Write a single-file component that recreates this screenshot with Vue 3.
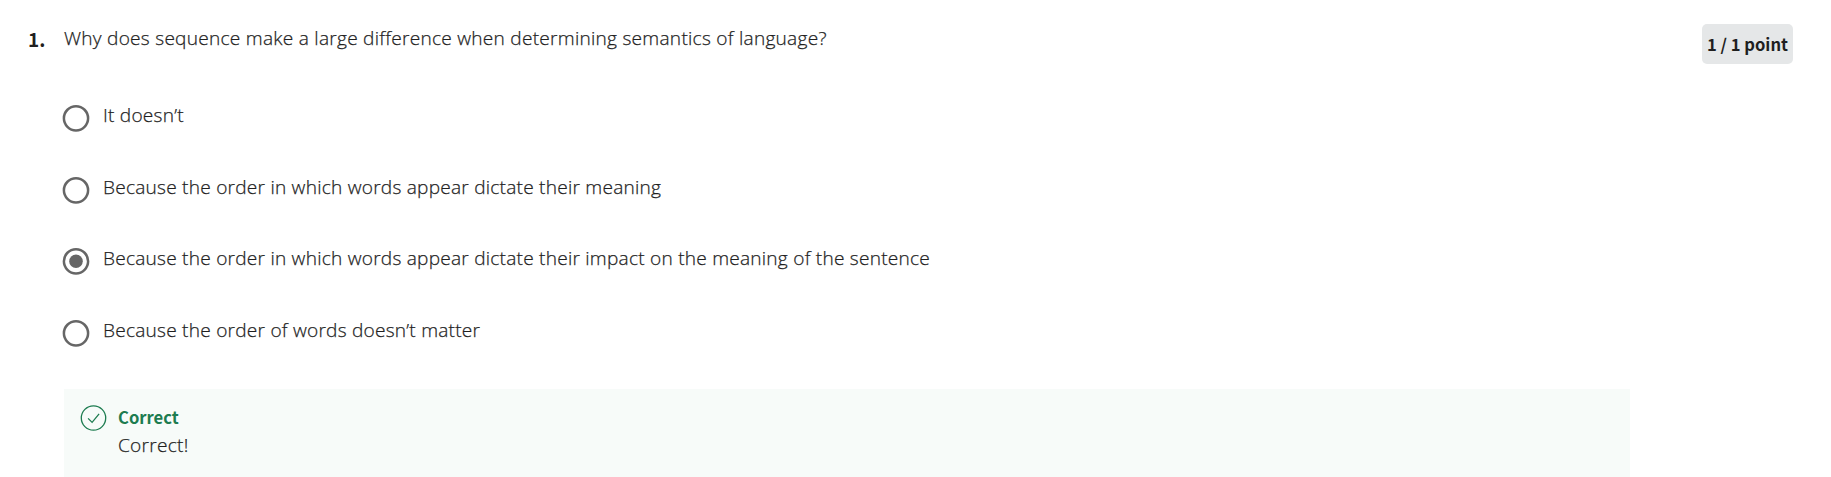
<script setup>
const options = [
  { text: 'It doesn’t' },
  { text: 'Because the order in which words appear dictate their meaning' },
  { text: 'Because the order in which words appear dictate their impact on the meaning of the sentence', checked: true },
  { text: 'Because the order of words doesn’t matter' },
]
</script>

<template>
  <main class="quiz">
    <div class="number">1.</div>
    <section class="body">
      <p class="prompt"><span>Why does sequence make a large difference when determining semantics of language?</span></p>
      <ul class="options">
        <li v-for="option in options" :key="option.text" class="option">
          <svg class="radio" width="28" height="28" viewBox="0 0 28 28">
            <circle cx="14" cy="14.3" r="12.1" fill="none" stroke="#666" stroke-width="2.5" />
            <circle v-if="option.checked" cx="14" cy="14.3" r="6.8" fill="#666" />
          </svg>
          <span class="label">{{ option.text }}</span>
        </li>
      </ul>
      <div class="feedback">
        <svg class="check" width="27" height="26" viewBox="0 0 27 26" fill="none" stroke="#1d7c50">
          <circle cx="13.5" cy="13" r="12.2" stroke-width="1.3" />
          <path d="M8.1 13.4l4 4 7-8.6" stroke-width="1.3" />
        </svg>
        <div>
          <div class="verdict"><span>Correct</span></div>
          <div class="note"><span>Correct!</span></div>
        </div>
      </div>
    </section>
    <div class="points">1 / 1 point</div>
  </main>
</template>

<style>
body {
  margin: 0;
  background: #fff;
}
</style>

<style scoped>
.quiz {
  display: flex;
  align-items: flex-start;
  box-sizing: border-box;
  height: 477px;
  padding: 24px 38px 0 28px;
  overflow: hidden;
  color: #1f1f1f;
  font-family: "Open Sans", sans-serif;
  font-size: 19.1px;
  font-weight: 300;
  line-height: 28px;
  letter-spacing: 0.255px;
  white-space: nowrap;
  -webkit-text-stroke: 0.25px currentColor;
}
.number {
  width: 36px;
  margin-top: -1px;
  font: 700 19px/32px "Noto Sans CJK SC", sans-serif;
  letter-spacing: 0;
  -webkit-text-stroke: 0;
}
.body {
  width: 1566px;
}
.prompt {
  margin: 0;
  height: 79px;
}
.options {
  margin: 0;
  padding: 0;
  list-style: none;
}
.option {
  display: flex;
  height: 71.6px;
}
.radio {
  flex: none;
  margin: 1.3px 13px 0 -2px;
}
.label {
  margin-top: -2px;
  letter-spacing: 0.23px;
}
.feedback {
  display: flex;
  box-sizing: border-box;
  height: 100px;
  margin-top: -0.4px;
  padding: 16px 0 0 16px;
  background: #f7fbf9;
}
.check {
  flex: none;
  margin-right: 11px;
}
.verdict {
  margin-top: -1px;
  color: #1d7c50;
  font: 700 16.6px/27px "Noto Sans CJK SC", sans-serif;
  letter-spacing: 0;
  -webkit-text-stroke: 0;
}
.points {
  box-sizing: border-box;
  width: 91px;
  height: 40px;
  margin-left: auto;
  border-radius: 5px;
  background: #e5e7e8;
  text-align: center;
  font: 700 16.6px/40px "Noto Sans CJK SC", sans-serif;
  letter-spacing: 0;
  -webkit-text-stroke: 0;
}
</style>
